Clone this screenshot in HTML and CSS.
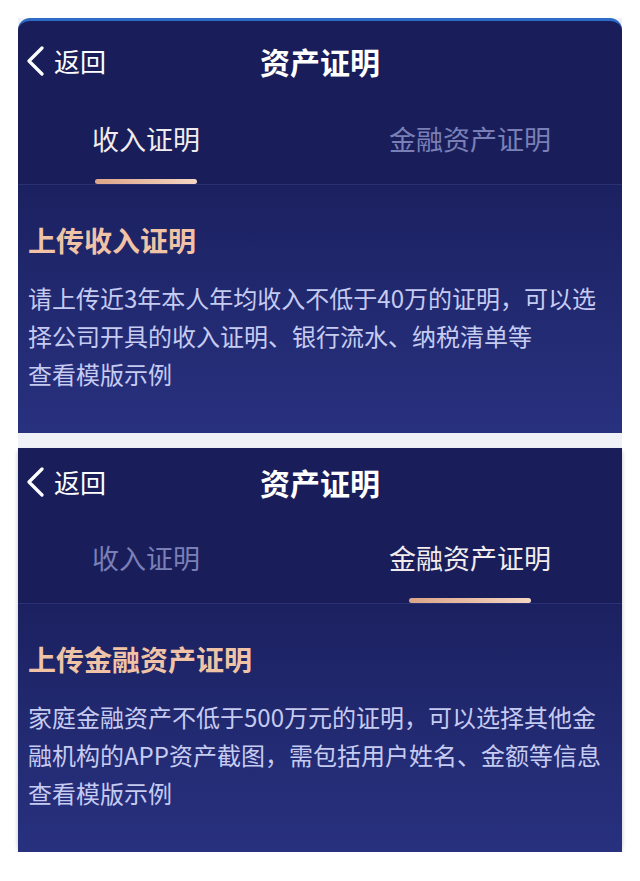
FILE: index.html
```html
<!DOCTYPE html>
<html lang="zh-CN">
<head>
  <meta charset="UTF-8">
  <meta name="viewport" content="width=device-width, initial-scale=1.0">
  <title>资产证明</title>
  <link rel="stylesheet" href="styles.css">
</head>
<body>

  <div class="sheet">

    <!-- 收入证明 -->
    <section class="panel panel-top">
      <header class="navbar">
        <a class="back" href="#">
          <svg class="back-icon" viewBox="0 0 20 30" width="20" height="30"><polyline points="17,2 4,15 17,28" /></svg>
          <span>返回</span>
        </a>
        <h1 class="title">资产证明</h1>
        <span></span>
      </header>
      <nav class="tabs">
        <div class="tab active">收入证明<i class="bar bar-short"></i></div>
        <div class="tab">金融资产证明</div>
      </nav>
      <div class="content">
        <h2 class="heading">上传收入证明</h2>
        <p class="desc">请上传近3年本人年均收入不低于40万的证明，可以选择公司开具的收入证明、银行流水、纳税清单等</p>
        <p class="desc">查看模版示例</p>
      </div>
    </section>

    <!-- 金融资产证明 -->
    <section class="panel panel-bottom">
      <header class="navbar navbar-cropped">
        <a class="back" href="#">
          <svg class="back-icon" viewBox="0 0 20 30" width="20" height="30"><polyline points="17,2 4,15 17,28" /></svg>
          <span>返回</span>
        </a>
        <h1 class="title">资产证明</h1>
        <span></span>
      </header>
      <nav class="tabs">
        <div class="tab">收入证明</div>
        <div class="tab active">金融资产证明<i class="bar bar-long"></i></div>
      </nav>
      <div class="content">
        <h2 class="heading">上传金融资产证明</h2>
        <p class="desc">家庭金融资产不低于500万元的证明，可以选择其他金融机构的APP资产截图，需包括用户姓名、金额等信息</p>
        <p class="desc">查看模版示例</p>
      </div>
    </section>

  </div>

</body>
</html>
```

FILE: styles.css
```css
body {
  margin: 0;
  background: #ffffff;
  font-family: "Noto Sans CJK SC", "Noto Sans", sans-serif;
}
.sheet {
  width: 604px;
  margin: 18px 0 0 18px;
  background: #eff1f6;
}
.panel {
  background: #191e5b;
  color: #fff;
}
.panel-top {
  border-top: 3px solid #2d6bc6;
  border-radius: 12px 12px 0 0;
  margin-bottom: 15px;
}
.panel-bottom {
  border-radius: 0 0 10px 10px;
  box-shadow: 0 3px 4px rgba(0, 0, 0, 0.25);
}
.navbar {
  height: 80px;
  display: grid;
  grid-template-columns: 1fr auto 1fr;
  align-items: center;
}
.navbar-cropped {
  height: 58px;
  padding-top: 14px;
  align-items: start;
}
.back {
  display: flex;
  align-items: center;
  gap: 9px;
  padding-left: 7px;
  height: 40px;
  color: #fff;
  text-decoration: none;
  font-size: 26px;
  line-height: 30px;
}
.back-icon polyline {
  fill: none;
  stroke: #fff;
  stroke-width: 3.2;
  stroke-linecap: round;
  stroke-linejoin: round;
}
.title {
  margin: 0;
  font-size: 30px;
  line-height: 40px;
  font-weight: 700;
}
.tabs {
  display: grid;
  grid-template-columns: 256px 256px;
  column-gap: 68px;
  height: 82px;
  padding-top: 1px;
  border-bottom: 1px solid #2a3174;
}
.tab {
  position: relative;
  text-align: center;
  font-size: 27px;
  line-height: 36px;
  padding-top: 19px;
  color: #7a80b6;
}
.tab.active {
  color: #f3ecec;
}
.bar {
  position: absolute;
  left: 50%;
  bottom: 0;
  height: 5px;
  border-radius: 3px;
  transform: translateX(-50%);
  background: linear-gradient(90deg, #dca588, #f4d6c4);
}
.bar-short {
  width: 102px;
}
.bar-long {
  width: 122px;
}
.content {
  padding: 35px 14px 40px 10px;
  background: linear-gradient(180deg, #1b2160 0%, #232b74 60%, #28317e 100%);
}
.heading {
  margin: 0 0 19px;
  font-size: 28px;
  line-height: 40px;
  font-weight: 700;
  color: #f0c3a6;
}
.desc {
  margin: 0;
  font-size: 24px;
  line-height: 38px;
  color: #c6cbf1;
}
```
